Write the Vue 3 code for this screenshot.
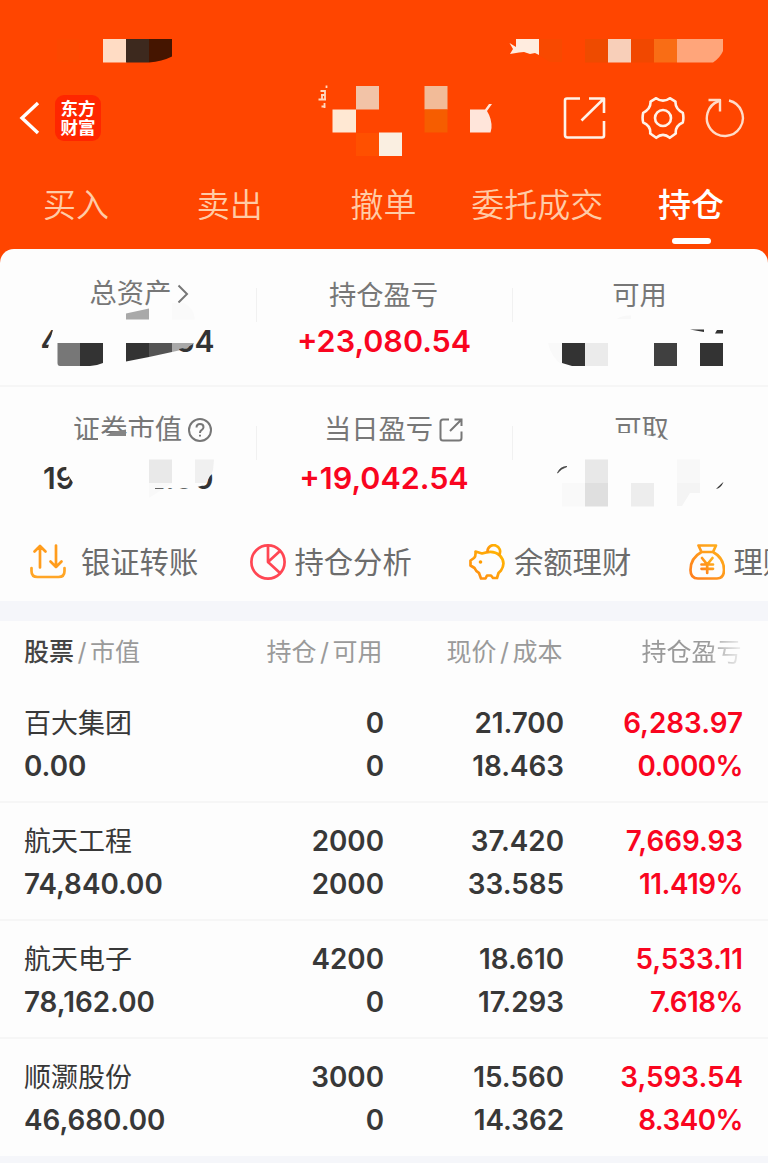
<script setup>
import { ref } from "vue";

const tabs = ["买入", "卖出", "撤单", "委托成交", "持仓"];
const activeTab = ref("持仓");

const holdings = ref([
  { name: "百大集团", value: "0.00", amount: "0", usable: "0", price: "21.700", cost: "18.463", profit: "6,283.97", rate: "0.000%" },
  { name: "航天工程", value: "74,840.00", amount: "2000", usable: "2000", price: "37.420", cost: "33.585", profit: "7,669.93", rate: "11.419%" },
  { name: "航天电子", value: "78,162.00", amount: "4200", usable: "0", price: "18.610", cost: "17.293", profit: "5,533.11", rate: "7.618%" },
  { name: "顺灏股份", value: "46,680.00", amount: "3000", usable: "0", price: "15.560", cost: "14.362", profit: "3,593.54", rate: "8.340%" }
]);
</script>

<template>
  <div class="page">
    <header class="header">
      <div class="navbar">
        <svg class="back" width="22" height="36" viewBox="0 0 22 36">
          <path d="M19 3 L3 18 L19 33" />
        </svg>
        <div class="logo"><span>东方</span><span>财富</span></div>
        <div class="tools">
          <svg class="share" width="44" height="44" viewBox="0 0 44 44">
            <path d="M17 2.5H4Q2 2.5 2 4.5V39Q2 41.500 4.500 41.500H39Q41 41.500 41 39.500V25" />
            <path d="M26 2.500H41V17M41 2.500L18.500 24.500" />
          </svg>
          <svg class="gear" width="44" height="44" viewBox="0 0 44 44">
            <path d="M15.200 2.200 Q22 7.200 28.800 2.200 L34.500 5.700 Q34 12.600 41.800 16.800 Q43 22 41.800 26.500 Q34 30 34.800 37.500 L28.800 41.800 Q22 36 15.200 41.800 L9.200 37.500 Q10 30 2.200 26.500 Q1 22 2.200 16.800 Q10 12.600 9.500 5.700 Z" />
            <circle cx="22" cy="22" r="8" />
          </svg>
          <svg class="refresh" width="40" height="42" viewBox="0 0 40 42">
            <path d="M24 3.500A18 18 0 1 1 14 4" />
            <path d="M3.500 3H15V14.500" />
          </svg>
        </div>
      </div>

      <nav class="tabs">
        <a v-for="tab in tabs" :key="tab" :class="{ active: tab === activeTab }" @click="activeTab = tab">{{ tab }}</a>
      </nav>

      <!-- mosaic over the status bar and the account name -->
      <svg class="mosaic" viewBox="0 0 768 248">
        <rect x="57" y="39" width="22" height="23" fill="#fc4700" />
        <rect x="103" y="39" width="23.500" height="23.500" fill="#ffdcc4" />
        <path d="M126 39H149V62.500H126Z" fill="#3d291e" />
        <path d="M149 39H172V56.500Q162 61.500 149 62.500Z" fill="#451500" />
        <path d="M516 39H539V55L535 53L530 54L524 52L519 52.500L510 54L513 49L509.500 43L516 47Z" fill="#ffecdf" />
        <path d="M508.500 45L512 49L508.500 53Z" fill="#ff4500" />
        <path d="M540 39H562V62H550L540 56Z" fill="#f84900" />
        <rect x="585" y="39" width="23" height="23.500" fill="#ee4b00" />
        <rect x="608" y="39" width="23" height="23.500" fill="#f8cfb9" />
        <rect x="631" y="39" width="23" height="23.500" fill="#f14800" />
        <rect x="654" y="39" width="23" height="23.500" fill="#f96d15" />
        <path d="M677 39H723V51Q720 58 713 62.500H677Z" fill="#ffa57a" />
        <path d="M326.500 85.500V88M320.500 91H325V95H321M325 95V99M318.500 99.500H326M322 96V99M321.500 106.500H325.500M324.500 103V108" fill="none" stroke="#ffd9c0" stroke-width="1.800" />
        <rect x="356" y="86" width="23" height="23.500" fill="#f2c3a7" />
        <rect x="332.500" y="109.500" width="23.500" height="23" fill="#ffe8d3" />
        <rect x="356" y="133" width="23" height="23" fill="#ff5000" />
        <rect x="379" y="132.500" width="23" height="23.500" fill="#faefe1" />
        <rect x="424.500" y="86" width="23" height="23.500" fill="#f2bb98" />
        <rect x="424.500" y="109.500" width="23" height="23" fill="#f65d00" />
        <path d="M470 109.500H485L489 104L492 104L487 111Q492 119 491.500 128L490.500 132.500H470Z" fill="#ffe5da" />
      </svg>
    </header>

    <section class="summary">
      <div class="summary-row">
        <div class="cell">
          <div class="label raised">总资产<svg class="chevron" width="12" height="20" viewBox="0 0 12 20"><path d="M1.500 1.500L10 10L1.500 18.500" /></svg></div>
        </div>
        <div class="cell">
          <div class="label">持仓盈亏</div>
          <div class="amount">+23,080.54</div>
        </div>
        <div class="cell">
          <div class="label">可用</div>
        </div>
      </div>
      <div class="summary-row second">
        <div class="cell">
          <div class="label">证券市值<svg class="help" width="24" height="24" viewBox="0 0 24 24"><circle cx="12" cy="12" r="11" /><path d="M8.500 9.500Q8.500 6 12 6Q15.500 6 15.500 9.200Q15.500 10.800 13.500 12.200Q12 13.200 12 15M12 16.800V18.500" /></svg></div>
        </div>
        <div class="cell">
          <div class="label today">当日盈亏<svg class="open" width="24" height="24" viewBox="0 0 24 24"><path d="M10 1.500H4Q1.500 1.500 1.500 4V20Q1.500 22.500 4 22.500H20Q22.500 22.500 22.500 20V13.500" /><path d="M15.500 1.500H22.500V8M22 2L11 13" /></svg></div>
          <div class="amount">+19,042.54</div>
        </div>
        <div class="cell">
          <div class="label takeout">可取</div>
        </div>
      </div>

      <!-- private balances: what is left of the digits, then the mosaic -->
      <svg class="mosaic" viewBox="0 249 768 272">
        <defs>
          <clipPath id="firstDigit"><path d="M40 326H54L48 348H40Z" /></clipPath>
          <clipPath id="lastDigits"><path d="M179 349L188 347L193 344L195.500 340V326H216V356H179Z" /></clipPath>
          <clipPath id="nine"><path d="M42 462H67L66 472L74 484V492H42Z" /></clipPath>
          <clipPath id="zeros"><path d="M155 488.300H190L197 487L205 485L210 476L214 472V492H155Z" /></clipPath>
        </defs>
        <text class="digits" x="40.500" y="352" clip-path="url(#firstDigit)">4</text>
        <text class="digits" x="43" y="489" clip-path="url(#nine)">19</text>

        <path d="M126 313.500L149 308.500V319.500H126Z" fill="#a9a9a9" />
        <path d="M172 303H184Q194 308 195 319.500H172Z" fill="#fafafa" />
        <path d="M57.500 343H80V366H60Q57.500 366 57.500 363Z" fill="#777" />
        <path d="M80 343H103V363Q96 366 90 366H80Z" fill="#333" />
        <path d="M126 343H149V357L126 361.500Z" fill="#333" />
        <path d="M149 343H172V352L149 357Z" fill="#545454" />
        <path d="M172 343H194L190 348L172 352Z" fill="#a9a9a9" />
        <text class="digits" x="214.500" y="352" text-anchor="end" clip-path="url(#lastDigits)">54</text>

        <path d="M98 436H127L150 438V443H98Z" fill="#fdfdfd" />
        <path d="M106 436L112 432L126 429.500V436Z" fill="#858585" />
        <rect x="149" y="459.500" width="23" height="23.500" fill="#e9e9e9" />
        <path d="M195 459.500H214L213 470L208 483H195Z" fill="#f0f0f0" />
        <path d="M149 483H172L149 498Z" fill="#f9f9f9" />
        <text class="digits" x="213.500" y="489" text-anchor="end" clip-path="url(#zeros)">2.00</text>

        <path d="M617 319Q622 315 631 315.500V319Z" fill="#f8f8f8" />
        <path d="M548 343H562V365Q551 357 548 343Z" fill="#f9f9f9" />
        <path d="M562 343H585V366H572L562 363Z" fill="#333" />
        <rect x="585" y="343" width="23" height="23" fill="#ebebeb" />
        <rect x="654" y="343" width="23" height="23" fill="#404040" />
        <rect x="700" y="343" width="23" height="23" fill="#333" />
        <path d="M690 329.500H704V332ZM717 330H723V333.500H715Z" fill="#333" />

        <path d="M612 433H634L652 436L672 441V447H612Z" fill="#fdfdfd" />
        <path d="M557.500 473Q560 466.500 567 466.500Q561 468.500 557.500 473Z" fill="#333" stroke="#444" stroke-width="0.800" />
        <path d="M716 489Q721 488 723.500 482Q722 483 716 489Z" fill="#333" />
        <rect x="585" y="459.500" width="23" height="23.500" fill="#e8e8e8" />
        <rect x="585" y="483" width="23" height="23.500" fill="#dfdfdf" />
        <rect x="562" y="483" width="23" height="23.500" fill="#f9f9f9" />
        <rect x="631" y="483" width="23" height="23.500" fill="#ededed" />
        <rect x="677" y="459.500" width="23" height="23.500" fill="#f8f8f8" />
        <path d="M677 483H700V493H690L682 506H677Z" fill="#f4f4f4" />
      </svg>
    </section>

    <section class="shortcuts">
      <a class="transfer">
        <svg width="36" height="36" viewBox="0 0 36 36">
          <path d="M1.500 24V27Q1.500 33 7.500 33H28.500Q34.500 33 34.500 27V24" stroke="#ffa526" />
          <path d="M10 23.500V2M4.500 7.500L10 2L15.500 7.500M26 1.500V23M20.500 17.500L26 23L31.500 17.500" stroke="#ff9c1c" />
        </svg>
        <span>银证转账</span>
      </a>
      <a>
        <svg width="36" height="36" viewBox="0 0 36 36">
          <g stroke="#ff4653">
            <circle cx="18" cy="18" r="16.600" />
            <path d="M18 2V18L30 29M18 18L30 7" />
          </g>
        </svg>
        <span>持仓分析</span>
      </a>
      <a>
        <svg width="36" height="36" viewBox="0 0 36 36">
          <defs>
            <linearGradient id="pig" x1="0" y1="1" x2="1" y2="0">
              <stop offset="0" stop-color="#ff8a14" />
              <stop offset="1" stop-color="#ffb800" />
            </linearGradient>
          </defs>
          <g stroke="url(#pig)">
            <path d="M6.500 7.500L13 9.500Q24 5.500 30.500 11Q37.500 18.500 32 26.500L29.500 29L28 34H24L22 31.500H18L16.500 34.500H12L10 29Q7 27.500 5.500 24L1.500 21.500V16.500L5 14Q7 12 6.500 7.500Z" />
            <path d="M18.500 7.500A6.300 6.300 0 1 1 30 11" />
          </g>
          <circle cx="11.500" cy="18" r="1.800" fill="#ff9c00" />
        </svg>
        <span>余额理财</span>
      </a>
      <a>
        <svg width="36" height="36" viewBox="0 0 36 36">
          <defs>
            <linearGradient id="bag" x1="0" y1="1" x2="1" y2="0">
              <stop offset="0" stop-color="#ff7d1e" />
              <stop offset="1" stop-color="#ffb21a" />
            </linearGradient>
          </defs>
          <g stroke="url(#bag)">
            <path d="M9.500 1.500H27L24 8H12.500ZM12.500 8Q1.500 14 1.500 26Q1.500 34.500 9 34.500H28Q35 34.500 35 26Q35 14 24 8" />
            <path d="M13 14L18.200 20.500L23.500 14M18.200 20.500V29M12.500 20.500H24M12.500 24.800H24" />
          </g>
        </svg>
        <span>理财</span>
      </a>
    </section>

    <section class="holdings">
      <div class="grid thead">
        <div><b>股票</b><i>/</i>市值</div>
        <div>持仓<i>/</i>可用</div>
        <div>现价<i>/</i>成本</div>
        <div class="fade">持仓盈亏</div>
      </div>
      <div v-for="item in holdings" :key="item.name" class="grid row">
        <div><span class="name">{{ item.name }}</span><span>{{ item.value }}</span></div>
        <div><span>{{ item.amount }}</span><span>{{ item.usable }}</span></div>
        <div><span>{{ item.price }}</span><span>{{ item.cost }}</span></div>
        <div class="red"><span>{{ item.profit }}</span><span class="rate">{{ item.rate }}</span></div>
      </div>
    </section>
  </div>
</template>

<style>
body {
  margin: 0;
  background: #f5f6fa;
}
</style>

<style scoped>
* {
  box-sizing: border-box;
}

.page {
  width: 768px;
  height: 1163px;
  overflow: hidden;
  background: #f5f6fa;
  font-family: Inter, "Noto Sans CJK SC", sans-serif;
  color: #383838;
}

svg {
  display: block;
  flex: none;
  fill: none;
}

.header {
  position: relative;
  height: 264px;
  padding-top: 90px;
  background: #ff4500;
}

.mosaic {
  position: absolute;
  left: 0;
  top: 0;
  width: 768px;
  pointer-events: none;
}

.navbar {
  display: flex;
  align-items: center;
  height: 56px;
  padding: 0 23px 0 19px;
}

.back path {
  stroke: #fff;
  stroke-width: 3.4;
}

.logo {
  display: flex;
  flex-direction: column;
  justify-content: center;
  align-items: center;
  width: 46px;
  height: 46px;
  margin-left: 14px;
  border-radius: 9px;
  background: #ff2600;
  color: #fff;
  font-family: "Noto Sans CJK SC", sans-serif;
  font-size: 17.5px;
  font-weight: 700;
  line-height: 19.5px;
}

.logo span {
  position: relative;
  top: -1px;
}

.tools {
  display: flex;
  align-items: center;
  margin-left: auto;
}

.tools path,
.tools circle {
  stroke: #fff2e8;
  stroke-width: 2.6;
  stroke-linejoin: round;
}

.share {
  margin-right: 0.5px;
}

.gear {
  margin-left: 33.5px;
}

.refresh {
  margin-left: 20px;
}

.tools .refresh path {
  stroke: #ffdcc8;
  stroke-width: 2.4;
}

.tabs {
  display: flex;
  height: 102px;
  margin-left: -1px;
  padding-top: 35px;
}

.tabs a {
  flex: 1;
  display: flex;
  flex-direction: column;
  align-items: center;
  font-size: 33px;
  font-weight: 350;
  line-height: 48px;
  white-space: nowrap;
  color: #ffcba6;
}

.tabs a.active {
  font-weight: 500;
  color: #fff;
}

.tabs a.active::after {
  content: "";
  width: 39px;
  height: 6px;
  margin-top: 9px;
  border-radius: 3px;
  background: #fff;
}

.summary {
  position: relative;
  height: 272px;
  margin-top: -15px;
  border-radius: 14px 14px 0 0;
  background: #fdfdfd;
}

.summary-row {
  display: flex;
  height: 138px;
  border-bottom: 2px solid #f6f6f6;
}

.summary-row.second {
  height: 134px;
  border-bottom: 0;
}

.cell {
  position: relative;
  flex: 1;
  padding-top: 27px;
  text-align: center;
}

.second .cell {
  padding-top: 23px;
}

.cell + .cell::before {
  content: "";
  position: absolute;
  left: 0;
  top: 39px;
  width: 1px;
  height: 34px;
  background: #f1f1f1;
}

.label {
  display: flex;
  justify-content: center;
  align-items: center;
  height: 40px;
  padding-right: 1px;
  font-size: 27.3px;
  line-height: 40px;
  color: #777;
}

.raised {
  margin-top: -2px;
  padding-left: 24px;
}

.today {
  padding-left: 20px;
}

.takeout {
  padding-left: 4px;
}

.label path,
.label circle {
  stroke: #777;
  stroke-width: 2;
}

.chevron {
  margin-left: 6px;
}

.help,
.open {
  margin-left: 6px;
}

.cell .help {
  margin-right: -30px;
}

.amount {
  margin-top: 7px;
  font-size: 30.5px;
  font-weight: 600;
  line-height: 36px;
  color: #f9051f;
}

.second .amount {
  margin-top: 10px;
}

.digits {
  fill: #333;
  font-size: 30px;
  font-weight: 600;
}

.shortcuts {
  display: flex;
  height: 80px;
  padding-left: 30px;
  background: #fdfdfd;
}

.shortcuts a {
  flex: 0 0 219.5px;
  display: flex;
  align-items: center;
  gap: 9px;
  height: 82px;
  font-size: 29.3px;
  white-space: nowrap;
  color: #6c6c6c;
}

.shortcuts a span {
  margin-top: -4px;
}

.shortcuts a.transfer {
  gap: 15px;
}

.shortcuts path,
.shortcuts circle {
  stroke-width: 2.7;
  stroke-linejoin: round;
  stroke-linecap: round;
}

.holdings {
  margin-top: 20px;
}

.grid {
  display: grid;
  grid-template-columns: 200px 160px 180px 179px;
  padding-left: 24px;
  text-align: right;
  background: #fdfdfd;
}

.grid > div:first-child {
  text-align: left;
}

.thead {
  height: 64px;
  font-size: 25px;
  line-height: 63px;
  color: #9a9a9a;
}

.thead div + div {
  padding-right: 1.5px;
}

.thead b {
  font-weight: 500;
  color: #444;
}

.thead i {
  display: inline-block;
  width: 16px;
  font-style: normal;
  text-align: center;
}

.fade {
  -webkit-mask-image: linear-gradient(90deg, #000 80%, transparent 102%);
  mask-image: linear-gradient(90deg, #000 80%, transparent 102%);
}

.row {
  height: 118px;
  padding-top: 17px;
  border-bottom: 2px solid #f6f6f6;
  font-size: 27.8px;
  font-weight: 600;
  line-height: 43.4px;
}

.row:last-child {
  height: 117px;
  border-bottom: 0;
}

.row span {
  display: block;
  height: 43.2px;
}

.row .name {
  font-size: 27px;
  font-weight: 400;
}

.red {
  color: #f9051f;
}

.row .rate {
  letter-spacing: -0.5px;
}
</style>
